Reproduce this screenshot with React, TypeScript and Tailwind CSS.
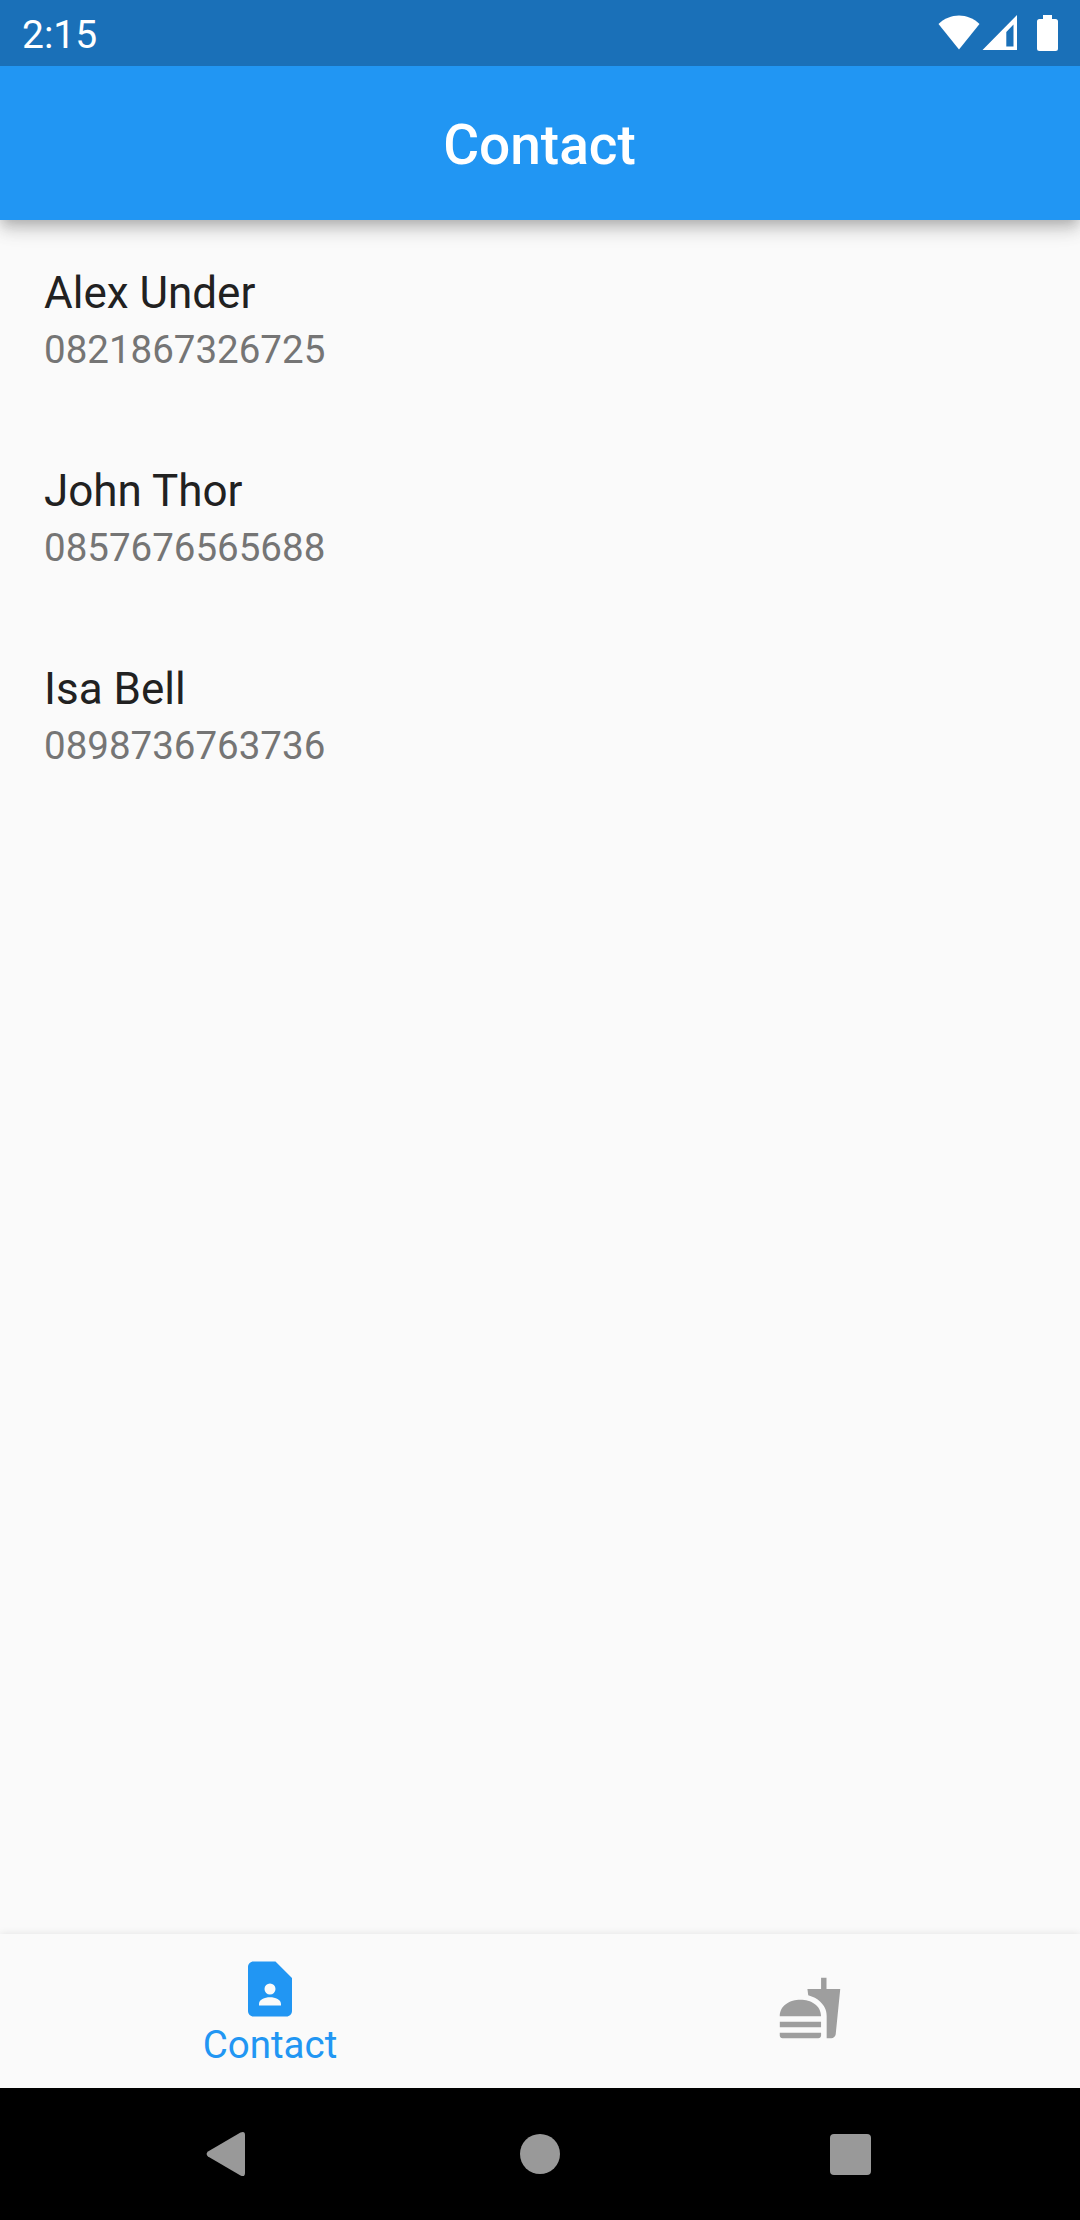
const contacts = [
  { name: 'Alex Under', phone: '0821867326725' },
  { name: 'John Thor', phone: '0857676565688' },
  { name: 'Isa Bell', phone: '0898736763736' },
];

function StatusBar() {
  return (
    <div className="z-20 flex h-[66px] shrink-0 items-start justify-between bg-[#1a70b8] px-[22px] text-white">
      <span className="pt-[12px] text-[39px] leading-[46px]">2:15</span>
      <div className="flex h-[66px] items-start pt-[15px]">
        <svg className="h-[35px] w-[42px]" viewBox="0 0 42 35" fill="currentColor">
          <path d="M0.5 9C12-2.5 30-2.5 41.5 9L21 34.5z" />
        </svg>
        <svg className="ml-[2px] h-[35px] w-[36px]" viewBox="0 0 36 35" fill="currentColor">
          <path fillRule="evenodd" d="M0.5 35L35 0V35zM24.3 17V31.5H31.5V9.5z" />
        </svg>
        <svg className="ml-[19px] h-[36px] w-[21px]" viewBox="0 0 21 36" fill="currentColor">
          <path d="M6 0H15V4H18.5Q21 4 21 6.500V33.500Q21 36 18.500 36H2.500Q0 36 0 33.500V6.500Q0 4 2.500 4H6z" />
        </svg>
      </div>
    </div>
  );
}

function ContactPageIcon() {
  return (
    <svg className="size-[66px]" viewBox="0 0 24 24" fill="currentColor">
      <path
        fillRule="evenodd"
        d="M13.99 2H6c-1.1 0-2 .9-2 2v16c0 1.100.9 2 2 2h12c1.100 0 2-.9 2-2V8zM12 10a2 2 0 110 4 2 2 0 010-4zM16 18H8v-.57C8 15.900 10 15 12 15s4 .9 4 2.430z"
      />
    </svg>
  );
}

function FastfoodIcon() {
  return (
    <svg className="size-[66px]" viewBox="0 0 24 24" fill="currentColor">
      <path d="M18.06 22.99h1.66c.84 0 1.530-.64 1.630-1.460L23 5.050h-5V1h-1.970v4.050h-4.970l.3 2.340c1.710.47 3.310 1.320 4.270 2.260 1.440 1.420 2.430 2.890 2.430 5.290v8.050zM1 21.990V21h15.030v.99c0 .55-.45 1-1.010 1H2.010c-.56 0-1.010-.45-1.010-1zM16.030 14.990c0-8-15.030-8-15.030 0h15.030zM1.020 17h15v2h-15z" />
    </svg>
  );
}

function SystemNav() {
  return (
    <div className="flex h-[132px] shrink-0 items-center bg-black pl-[206px] text-[#999999]">
      <svg className="h-[46px] w-[39px]" viewBox="0 0 39 46" fill="currentColor">
        <path d="M34.500 1.500Q39 -0.500 39 4V42Q39 46.500 34.500 44.500L2 25.500Q-0.800 23 2 20.500z" />
      </svg>
      <div className="ml-[275px] size-[40px] rounded-full bg-[#999999]" />
      <div className="ml-[270px] size-[41px] rounded-[4px] bg-[#999999]" />
    </div>
  );
}

export default function App() {
  return (
    <div className="flex h-[2220px] w-[1080px] flex-col overflow-hidden bg-[#fafafa] font-['Roboto',sans-serif]">
      <StatusBar />
      <header className="z-10 flex h-[154px] shrink-0 items-center justify-center bg-[#2196f3] pr-[1px] pt-[4px] shadow-[0_5px_11px_-3px_rgba(0,0,0,0.17),0_11px_14px_0_rgba(0,0,0,0.125),0_3px_27px_0_rgba(0,0,0,0.1)]">
        <h1 className="text-[55px] font-medium leading-[64px] text-white">Contact</h1>
      </header>
      <main className="flex-1">
        {contacts.map((c) => (
          <div key={c.phone} className="h-[198px] pl-[44px] pt-[47px]">
            <p className="text-[44px] leading-[52px] text-[#212121]">{c.name}</p>
            <p className="mt-[8px] text-[38.5px] leading-[45px] text-[#757575]">{c.phone}</p>
          </div>
        ))}
      </main>
      <nav className="flex h-[154px] shrink-0 bg-[#fafafa] shadow-[0_0_8px_rgba(0,0,0,0.1)]">
        <div className="flex w-1/2 flex-col items-center pt-[22px] text-[#2196f3]">
          <ContactPageIcon />
          <span className="text-[38.5px] leading-[45px]">Contact</span>
        </div>
        <div className="flex w-1/2 flex-col items-center pt-[41px] text-[#9e9e9e]">
          <FastfoodIcon />
        </div>
      </nav>
      <SystemNav />
    </div>
  );
}
